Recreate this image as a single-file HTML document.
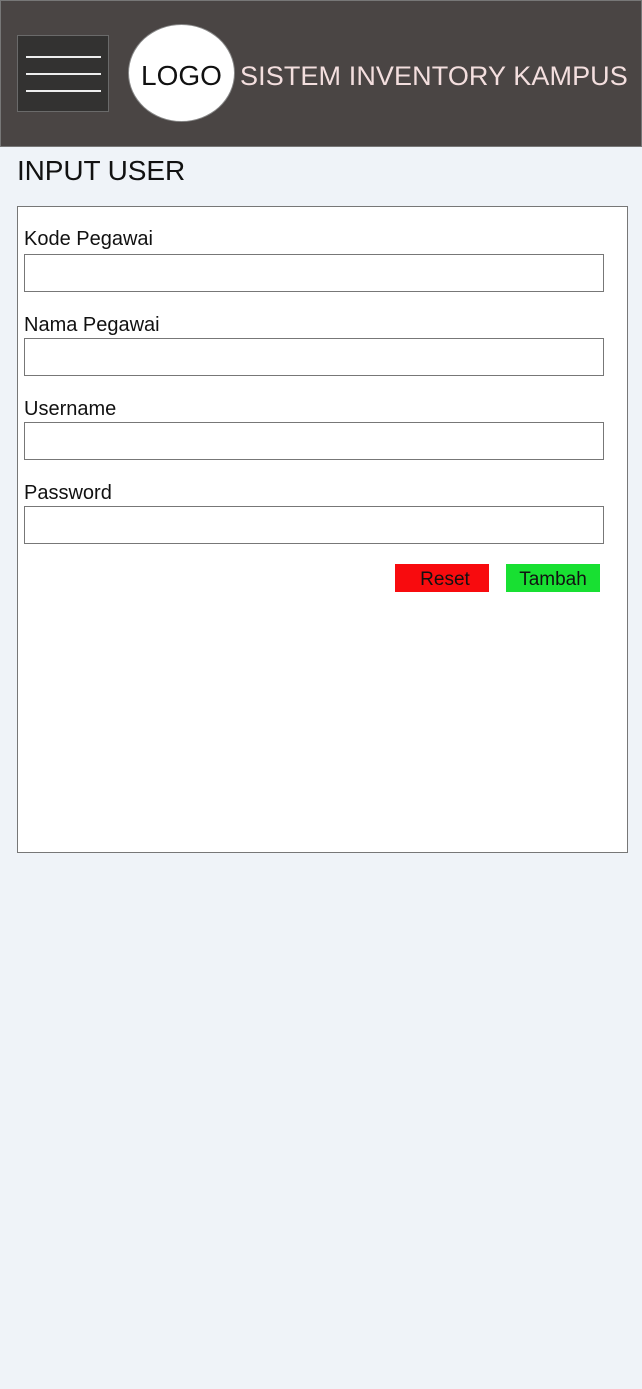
<!DOCTYPE html>
<html><head><meta charset="utf-8"><style>
*{margin:0;padding:0;box-sizing:border-box}
body{width:642px;height:1389px;background:#eff3f8;font-family:"Liberation Sans",sans-serif;position:relative;overflow:hidden}
.hdr{position:absolute;left:0;top:0;width:642px;height:147px;background:#4a4544;border:1px solid #777}
.menu{position:absolute;left:17px;top:35px;width:92px;height:77px;background:#333231;border:1px solid #6a6a6a}
.menu i{position:absolute;left:8px;width:75px;height:2px;background:#eee}
.logo{position:absolute;left:128px;top:24px;width:107px;height:98px;border-radius:50%;background:#fff;border:1px solid #888;font-size:28px;text-align:center;line-height:102px;color:#111}
.title{position:absolute;left:240px;top:61px;font-size:27px;color:#f3dede;white-space:nowrap;letter-spacing:0.1px}
h1{position:absolute;left:17px;top:155px;font-size:28px;font-weight:normal;color:#111;letter-spacing:-0.1px}
.card{position:absolute;left:17px;top:206px;width:611px;height:647px;background:#fff;border:1px solid #777}
.lbl{position:absolute;left:24px;font-size:20px;color:#111}
.inp{position:absolute;left:24px;width:580px;height:38px;border:1px solid #777;background:#fff}
.btn{position:absolute;top:564px;width:94px;height:28px;font-size:19px;color:#111;line-height:31px;text-align:center}
</style></head><body>
<div class="hdr"></div>
<div class="menu"><i style="top:20px"></i><i style="top:37px"></i><i style="top:54px"></i></div>
<div class="logo">LOGO</div>
<div class="title">SISTEM INVENTORY KAMPUS</div>
<h1>INPUT USER</h1>
<div class="card"></div>
<div class="lbl" style="top:228px">Kode Pegawai</div><div class="inp" style="top:254px"></div>
<div class="lbl" style="top:314px">Nama Pegawai</div><div class="inp" style="top:338px"></div>
<div class="lbl" style="top:398px">Username</div><div class="inp" style="top:422px"></div>
<div class="lbl" style="top:482px">Password</div><div class="inp" style="top:506px"></div>
<div class="btn" style="left:395px;background:#f80b0e;padding-left:6px">Reset</div>
<div class="btn" style="left:506px;background:#18e032">Tambah</div>
</body></html>
